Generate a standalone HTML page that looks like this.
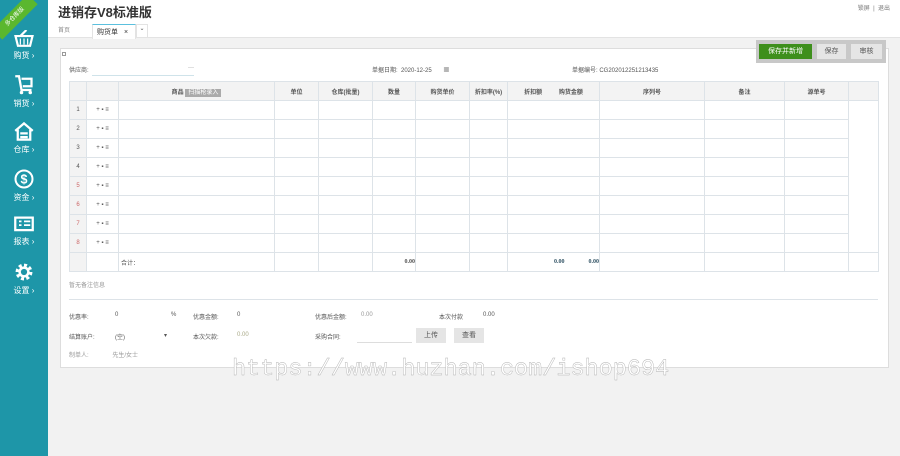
<!DOCTYPE html>
<html><head><meta charset="utf-8"><style>
*{margin:0;padding:0;box-sizing:border-box}
body{width:900px;height:456px;overflow:hidden;background:#f2f2f2;font-family:"Liberation Sans","Noto Sans CJK SC",sans-serif;font-size:7px;color:#555;position:relative}
.a{position:absolute}
#side{left:0;top:0;width:48px;height:456px;background:#1e96a8}
.nav{position:absolute;left:0;width:48px;text-align:center;color:#fff;font-size:8px}
.nav svg{display:block;margin:0 auto 3px}
#top{left:48px;top:0;width:852px;height:38px;background:#fff;border-bottom:1px solid #e3e3e3}
#panel{left:60px;top:48px;width:829px;height:320px;background:#fff;border:1px solid #ddd}
table{border-collapse:collapse;position:absolute;left:69px;top:81px}
td{border:1px solid #dde3e8;height:19px;font-size:6px;text-align:center;padding:0}
tr.h td{background:#f3f3f3;font-weight:bold;color:#555}
td.g{background:#f3f3f3}
.btn{position:absolute;top:44px;height:15px;font-size:7px;line-height:15px;text-align:center;background:#e5e5e5;color:#555}
</style></head><body>
<div id="side" class="a">
 <div class="a" style="width:50px;height:14px;background:#5bb72e;transform:rotate(-45deg);top:10px;left:-10px;color:#fff;font-size:6px;text-align:center;line-height:14px">多仓库版</div>
 <div class="nav" style="top:30px"><svg width="20" height="17" viewBox="0 0 16 14"><path d="M1 5h14l-2 8H3z M5 5l5-5" fill="none" stroke="#fff" stroke-width="1.8"/><path d="M5 7v5M8 7v5M11 7v5" stroke="#fff"/></svg>购货 ›</div>
 <div class="nav" style="top:75px"><svg width="20" height="20" viewBox="0 0 16 16"><path d="M1 1h3l2 11h8M6 3h8v6H7" fill="none" stroke="#fff" stroke-width="1.8"/><circle cx="6" cy="14" r="1.4" fill="#fff"/><circle cx="13" cy="14" r="1.4" fill="#fff"/></svg>销货 ›</div>
 <div class="nav" style="top:122px"><svg width="20" height="19" viewBox="0 0 16 15"><path d="M1 7L8 1l7 6M3 6v8h10V6M5 9h6M5 12h6" fill="none" stroke="#fff" stroke-width="1.8"/></svg>仓库 ›</div>
 <div class="nav" style="top:169px"><svg width="20" height="20" viewBox="0 0 16 16"><circle cx="8" cy="8" r="6.8" fill="none" stroke="#fff" stroke-width="1.6"/><text x="8" y="11.5" font-size="10" font-weight="bold" fill="#fff" text-anchor="middle" font-family="Liberation Sans">$</text></svg>资金 ›</div>
 <div class="nav" style="top:216px"><svg width="20" height="17" viewBox="0 0 16 13"><rect x="1" y="1" width="14" height="10" fill="none" stroke="#fff" stroke-width="1.8"/><path d="M4 4h2M8 4h5M4 7h2M8 7h5" stroke="#fff" stroke-width="1.4"/></svg>报表 ›</div>
 <div class="nav" style="top:262px"><svg width="20" height="20" viewBox="0 0 16 16"><circle cx="8" cy="8" r="5" fill="none" stroke="#fff" stroke-width="3.5" stroke-dasharray="2.2 1.7"/><circle cx="8" cy="8" r="3.5" fill="none" stroke="#fff" stroke-width="2"/></svg>设置 ›</div>
</div>
<div id="top" class="a">
 <div class="a" style="left:10px;top:2px;font-size:13px;font-weight:bold;color:#333">进销存V8标准版</div>
 <div class="a" style="right:10px;top:3px;font-size:6px;color:#777">锁屏 &nbsp;|&nbsp; 退出</div>
 <div class="a" style="left:10px;top:25px;font-size:6px;color:#888">首页</div>
 <div class="a" style="left:44px;top:24px;width:44px;height:15px;background:#fff;border:1px solid #e3e3e3;border-top:1px solid #5bc0de;border-bottom:none;font-size:7px;color:#333;padding:2px 4px">购货单 <span style="margin-left:4px">×</span></div>
 <div class="a" style="left:88px;top:24px;width:12px;height:14px;border:1px solid #e3e3e3;border-bottom:none;font-size:6px;text-align:center">⌄</div>
</div>
<div class="a" style="left:756px;top:40px;width:130px;height:23px;background:#c8c8c8;z-index:2"></div>
<div class="btn" style="left:759px;width:53px;background:#3e8f1c;color:#fff;z-index:3">保存并新增</div>
<div class="btn" style="left:817px;width:29px;z-index:3">保存</div>
<div class="btn" style="left:851px;width:31px;z-index:3">审核</div>
<div id="panel" class="a"></div>
<div class="a" style="left:62px;top:52px;width:4px;height:4px;border:1px solid #999"></div>
<div class="a" style="left:69px;top:65px;font-size:6px">供应商:</div>
<div class="a" style="left:92px;top:65px;width:102px;height:11px;border-bottom:1px solid #cfe3ea;font-size:6px;text-align:right">···</div>
<div class="a" style="left:372px;top:65px;font-size:6px">单据日期: &nbsp;2020-12-25 &nbsp;&nbsp;&nbsp;&nbsp;&nbsp;&nbsp;▦</div>
<div class="a" style="left:572px;top:65px;font-size:6px">单据编号: CG202012251213435</div>
<table>
<tr class="h"><td style="width:17px"></td><td style="width:32px"></td><td style="width:156px">商品 <span style="background:#aaa;color:#fff;padding:1px 3px;font-weight:normal">扫描枪录入</span></td><td style="width:44px">单位</td><td style="width:54px">仓库(批量)</td><td style="width:43px">数量</td><td style="width:54px">购货单价</td><td style="width:38px">折扣率(%)</td><td style="width:92px">折扣额 &nbsp;&nbsp;&nbsp;&nbsp;&nbsp;&nbsp;&nbsp;&nbsp; 购货金额</td><td style="width:105px">序列号</td><td style="width:80px">备注</td><td style="width:64px">源单号</td><td style="width:30px"></td></tr>
<tr><td class="g">1</td><td>+ ▪ ≡</td><td></td><td></td><td></td><td></td><td></td><td></td><td></td><td></td><td></td><td></td><td style="border:none;border-right:1px solid #dde3e8"></td></tr>
<tr><td class="g">2</td><td>+ ▪ ≡</td><td></td><td></td><td></td><td></td><td></td><td></td><td></td><td></td><td></td><td></td><td style="border:none;border-right:1px solid #dde3e8"></td></tr>
<tr><td class="g">3</td><td>+ ▪ ≡</td><td></td><td></td><td></td><td></td><td></td><td></td><td></td><td></td><td></td><td></td><td style="border:none;border-right:1px solid #dde3e8"></td></tr>
<tr><td class="g">4</td><td>+ ▪ ≡</td><td></td><td></td><td></td><td></td><td></td><td></td><td></td><td></td><td></td><td></td><td style="border:none;border-right:1px solid #dde3e8"></td></tr>
<tr><td class="g" style="color:#c66">5</td><td>+ ▪ ≡</td><td></td><td></td><td></td><td></td><td></td><td></td><td></td><td></td><td></td><td></td><td style="border:none;border-right:1px solid #dde3e8"></td></tr>
<tr><td class="g" style="color:#c66">6</td><td>+ ▪ ≡</td><td></td><td></td><td></td><td></td><td></td><td></td><td></td><td></td><td></td><td></td><td style="border:none;border-right:1px solid #dde3e8"></td></tr>
<tr><td class="g" style="color:#c66">7</td><td>+ ▪ ≡</td><td></td><td></td><td></td><td></td><td></td><td></td><td></td><td></td><td></td><td></td><td style="border:none;border-right:1px solid #dde3e8"></td></tr>
<tr><td class="g" style="color:#c66">8</td><td>+ ▪ ≡</td><td></td><td></td><td></td><td></td><td></td><td></td><td></td><td></td><td></td><td></td><td style="border:none;border-right:1px solid #dde3e8"></td></tr>
<tr><td class="g"></td><td></td><td style="text-align:left;padding-left:2px">合计：</td><td></td><td></td><td style="text-align:right;font-weight:bold;font-family:'Liberation Serif',serif">0.00</td><td></td><td></td><td style="text-align:right;font-weight:bold;color:#356;font-family:'Liberation Serif',serif">0.00 &nbsp;&nbsp;&nbsp;&nbsp;&nbsp;&nbsp;&nbsp;&nbsp;&nbsp;&nbsp;&nbsp;&nbsp;&nbsp;&nbsp; 0.00</td><td></td><td></td><td></td><td></td></tr>
</table>
<div class="a" style="left:69px;top:280px;font-size:6px;color:#999">暂无备注信息</div>
<div class="a" style="left:69px;top:299px;width:809px;border-top:1px solid #dde3e8"></div>
<div class="a" style="top:312px;left:69px;font-size:6px;width:820px">
 <span class="a" style="left:0">优惠率:</span><span class="a" style="left:46px">0</span><span class="a" style="left:102px">%</span><span class="a" style="left:124px">优惠金额:</span><span class="a" style="left:168px">0</span><span class="a" style="left:246px">优惠后金额:</span><span class="a" style="left:292px;color:#999">0.00</span><span class="a" style="left:370px">本次付款</span><span class="a" style="left:414px">0.00</span>
</div>
<div class="a" style="top:332px;left:69px;font-size:6px;width:820px">
 <span class="a" style="left:0">结算账户:</span><span class="a" style="left:46px">(空)</span><span class="a" style="left:95px">▾</span><span class="a" style="left:124px">本次欠款:</span><span class="a" style="left:168px;color:#aa8">0.00</span><span class="a" style="left:246px">采购合同:</span>
</div>
<div class="a" style="left:357px;top:330px;width:55px;height:13px;border-bottom:1px solid #ddd"></div>
<div class="a" style="left:416px;top:328px;width:30px;height:15px;background:#e5e5e5;font-size:7px;text-align:center;line-height:15px">上传</div>
<div class="a" style="left:454px;top:328px;width:30px;height:15px;background:#e5e5e5;font-size:7px;text-align:center;line-height:15px">查看</div>
<div class="a" style="top:350px;left:69px;font-size:6px;color:#999">制单人: <span style="margin-left:22px">先生/女士</span></div>
<div class="a" style="left:232px;top:357px;font-family:'Liberation Mono',monospace;font-size:23.5px;color:#fff;-webkit-text-stroke:0.4px #b0b0b0;white-space:nowrap;line-height:26px">https://www.huzhan.com/ishop694</div>
</body></html>
